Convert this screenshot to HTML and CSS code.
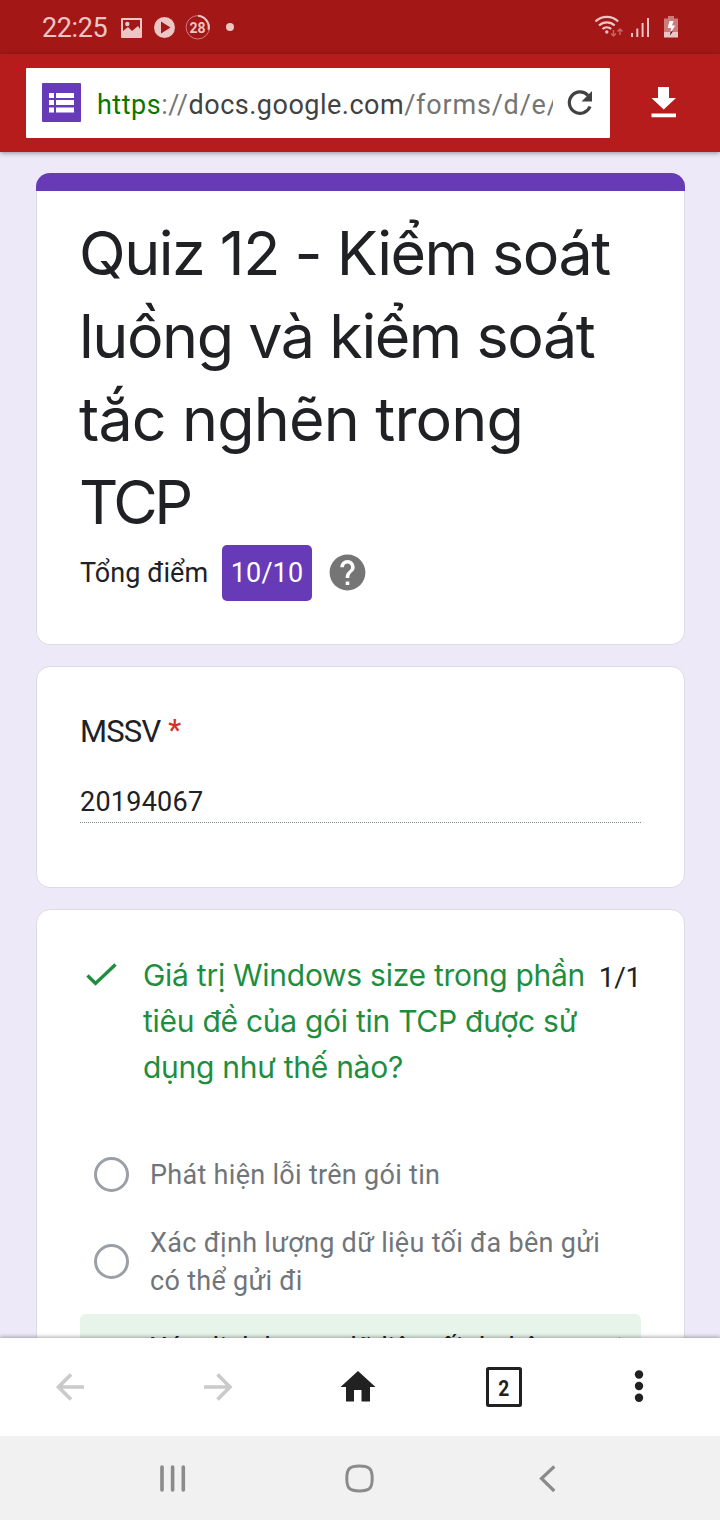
FILE: index.html
```html
<!DOCTYPE html>
<html lang="vi">
<head>
<meta charset="utf-8">
<title>Quiz 12</title>
<link rel="stylesheet" href="styles.css">
</head>
<body>
<div class="phone">
  <header class="status">
    <span class="clock">22:25</span>
    <svg class="status-left" width="120" height="30" viewBox="118 12 120 30">
      <path fill="#ecc5c5" fill-rule="evenodd" d="M122 18h19a1 1 0 0 1 1 1v18a1 1 0 0 1-1 1h-19a1 1 0 0 1-1-1v-18a1 1 0 0 1 1-1zM123 20v11l5-4 4 4 6-5 2 3v-9z"/>
      <circle cx="127.300" cy="24" r="2.200" fill="#ecc5c5"/>
      <circle cx="164.500" cy="27.500" r="10.500" fill="#ecc5c5"/>
      <path fill="#a31816" d="M161 21.500l9.500 6-9.500 6z"/>
      <circle cx="197.800" cy="27.300" r="11.700" fill="none" stroke="#d07b79" stroke-width="1"/>
      <path d="M198 15.700a11.700 11.700 0 0 1 10.500 14" fill="none" stroke="#ecc5c5" stroke-width="2"/>
      <text class="ring-text" x="197.500" y="32.500" text-anchor="middle">28</text>
      <circle cx="230" cy="27" r="4" fill="#ecc5c5"/>
    </svg>
    <svg class="status-right" width="90" height="30" viewBox="592 12 90 30">
      <g fill="none" stroke="#ecc5c5" stroke-width="2.200">
        <path d="M595.500 21.500a16.200 16.200 0 0 1 22.700 0"/>
        <path d="M599 25.500a11.500 11.500 0 0 1 15.700 0"/>
        <path d="M602.500 29a6.500 6.500 0 0 1 8.700 0"/>
      </g>
      <circle cx="606.800" cy="32" r="1.700" fill="#ecc5c5"/>
      <path d="M613.500 30v6m-2.500-2.500l2.500 2.500 2.500-2.500M620 35v-6m-2.500 2.500l2.500-2.500 2.500 2.500" fill="none" stroke="#c46564" stroke-width="1.500"/>
      <path d="M632 33v4M637.300 28.500v8.500M642.600 23v14M648 18v19" stroke="#ecc5c5" stroke-width="2"/>
      <path fill="#cc7c7b" d="M668 16h6v2.500h4V32h-14V18.500h4z"/>
      <path fill="#ecc5c5" d="M664 32h14v5.500h-14z"/>
      <path fill="#fff" d="M669.500 21h4l-1.500 4.500h3.200l-5 8 1-5.500h-3.500z"/>
      <path fill="#3c0d0c" d="M670.700 31.500l2.200 0-3 4z"/>
    </svg>
  </header>
  <div class="toolbar">
    <div class="address">
      <svg class="favicon" width="39" height="39" viewBox="0 0 39 39">
        <rect width="39" height="39" rx="1" fill="#673ab7"/>
        <path fill="#fff" d="M7 10h5v5H7zM14 10h18v5H14zM7 17h5v5H7zM14 17h18v5H14zM7 24.500h5v5H7zM14 24.500h18v5H14z"/>
      </svg>
      <div class="url"><span class="scheme">https</span>://<span class="host">docs.google.com</span><span class="path">/forms/d/e/</span></div>
      <svg class="reload" width="28" height="28" viewBox="0 0 28 28">
        <path d="M24 17.500A10.700 10.700 0 1 1 22 6.500" fill="none" stroke="#424242" stroke-width="3.200"/>
        <path fill="#424242" d="M26 2v10.500H15.500z"/>
      </svg>
    </div>
    <svg class="download" width="26" height="32" viewBox="0 0 26 32">
      <path fill="#fff" d="M7 1h11v11h7L12.700 23.500.500 12H7zM.500 27.500h24.500v3.700H.500z"/>
    </svg>
  </div>

  <main class="page">
    <section class="card title-card">
      <h1 class="title">
        <span class="t1">Quiz 12 - Kiểm soát</span>
        <span class="t2">luồng và kiểm soát</span>
        <span class="t3">tắc nghẽn trong</span>
        <span class="t4">TCP</span>
      </h1>
      <div class="score">
        <span class="score-label">Tổng điểm</span>
        <span class="badge">10/10</span>
        <svg class="help" width="43" height="43" viewBox="0 0 24 24"><path fill="#757575" d="M12 2C6.480 2 2 6.480 2 12s4.480 10 10 10 10-4.480 10-10S17.520 2 12 2zm1 17h-2v-2h2v2zm2.070-7.750l-.9.920C13.450 12.900 13 13.500 13 15h-2v-.5c0-1.100.45-2.100 1.170-2.830l1.240-1.260c.37-.36.590-.86.590-1.410 0-1.100-.9-2-2-2s-2 .9-2 2H8c0-2.210 1.790-4 4-4s4 1.790 4 4c0 .88-.36 1.680-.93 2.250z"/></svg>
      </div>
    </section>

    <section class="card id-card">
      <div class="field-label">MSSV <span class="required">*</span></div>
      <div class="field-value">20194067</div>
    </section>

    <section class="card question-card">
      <div class="question">
        <svg class="check" width="31" height="24" viewBox="0 0 31 24"><path d="M1.500 12.500l8 8L29.500 1.500" fill="none" stroke="#1e8e3e" stroke-width="3.400"/></svg>
        <h2 class="question-text">
          <span class="q1">Giá trị Windows size trong phần</span>
          <span class="q2">tiêu đề của gói tin TCP được sử</span>
          <span class="q3">dụng như thế nào?</span>
        </h2>
        <span class="points">1/1</span>
      </div>
      <div class="option first"><i class="radio"></i><span>Phát hiện lỗi trên gói tin</span></div>
      <div class="option second"><i class="radio"></i><span>Xác định lượng dữ liệu tối đa bên gửi<br>có thể gửi đi</span></div>
      <div class="option correct"><i class="radio"></i><span>Xác định lượng dữ liệu tối đa bên</span>
        <svg class="option-check" width="31" height="24" viewBox="0 0 31 24"><path d="M1.500 12.500l8 8L29.500 1.500" fill="none" stroke="#1e8e3e" stroke-width="3.400"/></svg>
      </div>
    </section>
  </main>

  <nav class="browser-nav">
    <svg width="720" height="98" viewBox="0 1338 720 98">
      <path d="M84 1387H58M71 1374.500L58.500 1387 71 1399.500M204 1387h26M217.500 1374.500L230 1387l-12.500 12.500" fill="none" stroke="#cacaca" stroke-width="3.600"/>
      <path fill="#212121" d="M358 1371l17.500 16h-5.500v14.500h-8.500V1390h-7.500v11.500h-8V1387h-5.500z"/>
      <rect x="487.500" y="1368.500" width="33" height="37" rx="1" fill="none" stroke="#212121" stroke-width="3"/>
      <text class="tabs" x="503.800" y="1396" text-anchor="middle" textLength="11" lengthAdjust="spacingAndGlyphs">2</text>
      <g fill="#212121"><circle cx="639" cy="1374.500" r="4.200"/><circle cx="639" cy="1386" r="4.200"/><circle cx="639" cy="1397.700" r="4.200"/></g>
    </svg>
  </nav>
  <nav class="system-nav">
    <svg width="720" height="84" viewBox="0 1436 720 84">
      <g fill="none" stroke="#8b8b8b" stroke-width="3.600" stroke-linecap="round">
        <path d="M162 1467v23M172.600 1467v23M183.300 1467v23"/>
        <path stroke-width="3" d="M359.500 1466c10 0 12.700 2.700 12.700 12.500s-2.700 12.500-12.700 12.500-12.700-2.700-12.700-12.500 2.700-12.500 12.700-12.500z"/>
        <path stroke-width="3.200" stroke-linecap="butt" d="M554.300 1466.500L541.500 1478.500l12.800 12.500"/>
      </g>
    </svg>
  </nav>
</div>
</body>
</html>
```
FILE: styles.css
```css
* { box-sizing: border-box; }
body { margin: 0; font-family: Roboto, "Noto Sans", sans-serif; color: #202124; }
svg { display: block; flex: none; }
.phone { width: 720px; height: 1520px; display: flex; flex-direction: column; overflow: hidden; background: #fff; }

.status { height: 54px; flex: none; display: flex; align-items: center; padding: 0 38px 0 42px; background: #a31816; }
.clock { width: 76px; font-size: 27px; line-height: 32px; color: #ecc5c5; letter-spacing: -0.4px; white-space: nowrap; padding-top: 2px; }
.status-right { margin-left: auto; }
.ring-text { font: 700 14px Roboto, sans-serif; fill: #ecc5c5; }

.toolbar { position: relative; z-index: 1; height: 98px; flex: none; display: flex; align-items: center; padding: 0 42px 0 26px; background: #b71c1c; box-shadow: 0 1px 5px rgba(0,0,0,.4); }
.address { width: 584px; height: 70px; display: flex; align-items: center; padding-left: 16px; background: #fff; border-radius: 1px; }
.favicon { margin-bottom: 1px; }
.url { width: 456px; margin-left: 16px; overflow: hidden; white-space: nowrap; font-size: 27px; line-height: 40px; letter-spacing: .5px; color: #757575; padding-top: 3px; }
.scheme { color: #0b7500; }
.host { color: #424242; }
.path { letter-spacing: .8px; }
.reload { margin-left: 13px; }
.download { margin-left: auto; margin-right: 1px; margin-bottom: 2px; }

.page { height: 1186px; flex: none; overflow: hidden; display: flex; flex-direction: column; gap: 21px; padding: 21px 35px 0 36px; background: #eee9f8; }
.card { flex: none; background: #fff; border: 1px solid #dadce0; border-radius: 14px; padding: 0 43px; }
.title-card { height: 472px; border-width: 0; padding: 0; overflow: hidden; box-shadow: inset 0 0 0 1px #dadce0; }
.title-card::before { content: ""; display: block; height: 18px; background: #673ab7; }
.title { margin: 21px 0 0 43px; font: 400 61px/83px Inter, sans-serif; font-weight: 370; white-space: nowrap; }
.title span, .question-text span { display: block; }
.t1 { letter-spacing: -1.5px; }
.t2 { letter-spacing: -1.45px; }
.t3 { letter-spacing: -.85px; }
.t4 { letter-spacing: -3.4px; }
.score { display: flex; align-items: center; height: 56px; margin: 1px 0 0 44px; }
.score-label { width: 142px; font-size: 27px; letter-spacing: .05px; white-space: nowrap; }
.badge { width: 90px; height: 56px; line-height: 56px; text-align: center; border-radius: 5px; background: #673ab7; color: #fff; font-size: 27px; letter-spacing: .1px; }
.help { margin: 0 0 1px 13.5px; }

.id-card { height: 222px; padding-top: 45px; }
.field-label { height: 40px; font-size: 31px; line-height: 40px; letter-spacing: -.8px; }
.required { color: #d93025; font-size: 29px; font-weight: 500; margin-left: 1px; vertical-align: 2px; line-height: 1; }
.field-value { height: 52px; margin-top: 19px; width: 561px; padding-top: 14px; font-size: 27px; line-height: 34px; letter-spacing: .25px; border-bottom: 1px dotted #80868b; }

.question-card { height: 640px; padding-top: 42px; }
.question { display: flex; height: 138px; }
.check { margin: 10.5px 26.5px 0 5.5px; }
.question-text { width: 457px; margin: 0; font: 400 30px/46px Inter, sans-serif; letter-spacing: -.27px; color: #1e8e3e; white-space: nowrap; }
.points { font-size: 28px; line-height: 51px; letter-spacing: -.3px; }
.option { display: flex; align-items: center; width: 561px; padding: 0 14px; color: #70757a; font-size: 27px; line-height: 38px; letter-spacing: .3px; white-space: nowrap; }
.option span { padding-top: 1px; }
.radio { width: 35px; height: 35px; flex: none; margin-right: 21px; border: 3px solid #9aa0a6; border-radius: 50%; }
.first { height: 38px; margin-top: 65px; }
.second { height: 78px; margin-top: 29px; }
.correct { height: 120px; margin-top: 14px; padding: 14px 19px 0 14px; align-items: flex-start; background: #e6f4ea; color: #202124; border-radius: 6px; }
.correct .radio { margin-top: 20px; }
.option-check { margin: 9px 0 0 auto; }

.browser-nav { position: relative; height: 98px; flex: none; background: #fff; box-shadow: 0 -1px 4px rgba(0,0,0,.35); }
.tabs { font: 700 22px Roboto, sans-serif; fill: #212121; }
.system-nav { position: relative; height: 84px; flex: none; background: #f1f1f1; }
```
